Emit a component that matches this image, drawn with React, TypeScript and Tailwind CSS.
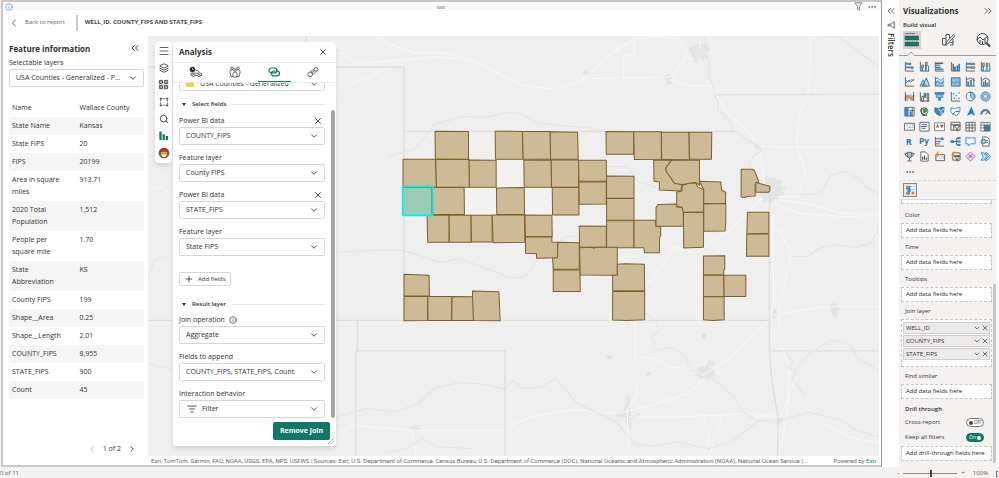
import React from 'react';
import {
  ChevronDown,
  ChevronLeft,
  ChevronRight,
  ChevronsLeft,
  ChevronsRight,
  Ellipsis,
  Info,
  Layers,
  ListFilter,
  Menu,
  Plus,
  Search,
  X,
} from 'lucide-react';

const GRAY = '#605e5c';
const BLUE = '#2b8ad0';
const LIGHT = '#8cc4ee';

const attributes = [
  ['Name', 'Wallace County'],
  ['State Name', 'Kansas'],
  ['State FIPS', '20'],
  ['FIPS', '20199'],
  ['Area in square miles', '913.71'],
  ['2020 Total Population', '1,512'],
  ['People per square mile', '1.70'],
  ['State Abbreviation', 'KS'],
  ['County FIPS', '199'],
  ['Shape__Area', '0.25'],
  ['Shape__Length', '2.01'],
  ['COUNTY_FIPS', '8,955'],
  ['STATE_FIPS', '900'],
  ['Count', '45'],
];

const westCounties = [
  'M136 34L236 35V118H137Z',
  'M316 34L398 35L400 118H317Z',
  'M398 35H481L482 118H400Z',
  'M481 36L563 37L565 118H482Z',
  'M40 118H138L140 202H40Z',
  'M138 118L238 119L239 202H140Z',
  'M238 120L319 121V202H239Z',
  'M402 121L484 120L485 202H403Z',
  'M484 120H566V202H485Z',
  'M128 203H223L224 284H129Z',
  'M320 204L403 203L404 284H321Z',
  'M487 203H567V285H488Z',
  'M112 285L178 286V367H114Z',
  'M178 286H244V367H179Z',
  'M244 286H307V366H245Z',
  'M307 285H404L405 367L310 368Z',
  'M405 285L486 286L487 350H407Z',
  'M407 351L486 350V366L504 367L503 413L440 415V401L407 400Z',
  'M504 367L568 368V448H490L488 415L503 413Z',
  'M490 449L570 450L571 514H490Z',
  'M43 463L118 466L119 527L43 528Z',
  'M43 529H114V601L43 602Z',
  'M114 529H187L185 601H115Z',
  'M187 529L250 530L251 601H186Z',
  'M248 513L327 515L328 530L331 602L251 601Z',
];

const eastCounties = [
  'M48 35L131 36V103H49Z',
  'M131 36H214V118L133 119Z',
  'M214 37H297L298 118L215 119Z',
  'M297 37H365L364 118H298Z',
  'M-34 121H49L50 184H-33Z',
  'M-33 186H49V252L-32 253Z',
  'M50 168L132 169V234L50 235Z',
  'M50 236H132V301H50Z',
  'M50 302H132V383H50Z',
  'M-32 318L49 319V382H-31Z',
  'M-31 383L8 382L11 385L16 382H82V466L-29 465Z',
  'M132 301H196L198 318L212 321V348L209 350L208 398H163L162 383H132Z',
  'M82 433L104 431L163 433L164 511L68 512V466L82 465Z',
  'M68 514H164V599L110 601L68 600Z',
  'M191 121L245 120L227 146L250 186L276 194L272 213L208 210V186L192 184Z',
  'M245 120L328 121V196L318 188L300 191L276 194L254 191L227 152L229 141Z',
  'M260 216L276 213V197L300 189L318 190L322 200L340 209V276L276 277V262L260 260Z',
  'M198 263L204 254L260 252V261L276 263L280 278V319H198Z',
  'M280 278L340 277V382L281 384Z',
  'M329 187L330 184L392 186L394 211L407 217L406 250L341 251V209Z',
  'M341 252L407 251V306L405 333L341 334Z',
  'M453 148H487L493 152L504 180L506 188L495 192V228L475 229L462 233L453 231Z',
  'M497 187L508 191L539 199V213L534 217H497Z',
  'M472 277H536V340L470 342Z',
  'M470 343L536 342V409H469Z',
  'M340 408L404 407V447L401 450V465H340Z',
  'M340 466H401L402 529H340Z',
  'M401 466H467V529H402Z',
  'M340 530H402V599L368 601L340 599Z',
];

const boundaries = [
  'M-546 202H206V395H1120L1130 395',
  'M206 395V961',
  'M-546 961H1228',
  'M-68 108V202',
  'M76 961V1052M71 1367V1052H488V1367',
  'M1075 285L1534 283',
  'M1228 1052H1534',
  'M1228 560V1052L1236 1150L1252 1250L1251 1367',
];

const rivers = [
  'M1045 108l4 22l8 20l-2 28l6 20l-2 30l10 28l6 30l10 20l-2 26l16 10l8 18l14 8l4 22l22 14l14 16l20 8l18 12l6 14l-22 12l-12 30l8 18l24 24l10 28l20 14l16 18',
  'M0 758L90 752L200 750L310 788L360 776L440 806L500 834L545 830L580 780L625 760L650 714L675 708L700 716',
  'M160 472L240 445L290 375L370 350L440 352L500 336L540 344L580 370L650 378L720 384L770 394',
  'M-546 1080L-400 1120L-300 1050L-200 1090L-60 1030L0 1255L100 1225L180 1235L245 1210L290 1165L360 1148L430 1152L490 1168L510 1140L540 1165L590 1160L630 1135L660 1170L690 1210L750 1240L800 1265L850 1330L900 1338L970 1325L1060 1345L1130 1318L1200 1260L1260 1260L1340 1236L1430 1260L1470 1290L1534 1310',
  'M884 940L910 965L922 990L896 1015L910 1030L900 1050L925 1048L950 1040L990 1065L1010 1108L1060 1125L1090 1155L1130 1190L1150 1232L1190 1260L1250 1268',
  'M1285 768L1330 770L1370 742L1420 735L1470 742L1510 730L1534 690M1340 768L1380 740',
  'M1310 585L1370 580L1400 525L1440 515L1480 538L1500 565L1534 580',
  'M1275 1060l20 24l-16 18l22 10l-10 26l20 24l14 26M1300 1108L1340 1060L1400 1020L1450 1030L1480 1080L1534 1110',
  'M770 500L830 500L860 545L905 560L960 575',
  'M1360 108L1420 110L1470 150L1534 200',
  'M148 1360L210 1345L260 1315L300 1340L400 1345',
  'M-546 460L-480 470L-430 360L-350 420L-260 380L-150 500L-60 440',
  'M-546 860L-520 850L-490 780L-460 770',
];

const roads = [
  'M0 320L60 255L150 210L210 180L290 172L370 178L420 192L480 228L540 258L620 268L690 248L740 208L800 150L850 120L910 110L970 118L1000 160L960 228L940 232L710 237L690 248',
  'M130 108L160 132L240 160L320 160L400 180',
  'M0 155L40 165L70 190L150 186L210 178',
  'M850 108V165L820 170V235M950 240L1000 258H1065L1110 340L1160 385L1200 440L1215 560',
  'M1343 108L1340 260L1310 350L1305 440L1330 520L1310 590L1250 590',
  'M1200 440L1300 442L1534 440',
  'M1240 600L1330 610L1430 640L1534 640M1240 610L1310 640L1440 650L1534 645',
  'M1210 590L1130 680L1020 760L960 740L940 780L900 840L850 870',
  'M853 962V1070L858 1180L830 1230L835 1360M858 1070L910 1075L950 1100L1010 1105L1045 1125L1120 1070L1228 960L1240 900L1235 640',
  'M0 1310L60 1275L230 1290L480 1290L560 1250L680 1228L800 1240L900 1215L1000 1180L1045 1135',
  'M835 1250L970 1250L1170 1240L1260 1250L1300 1140M1045 1255L1060 1300L1050 1360M1100 1240L1080 1300L1060 1367M230 1290L240 1367',
  'M1240 945L1380 920L1534 920M1255 945L1258 1030L1285 1100L1280 1220L1256 1367M1210 680L1255 690L1290 760L1270 850L1250 940',
  'M380 580L530 600L560 612L640 610M690 560L770 540',
  'M1534 1330L1450 1310L1380 1270M-546 580L-470 560L-440 595',
];

const towns = [
  'M1005 140h16v-8h10v12h6v-12h20v14h8l-6 10h-10v8h6v10h-10v10h-8v-8h-8v12h-12l2-14h-8v-12h-6z',
  'M928 232l14-8h12l2 30h-14l-4-14z',
  'M1208 545l10-12v-8l12 10l12-8l6 14l16 2l-6 12l22 8l-16 8l6 14l-14 2l-8 20l-8-8l-10 16l-6-14l-14 8v-18l-16 4l8-16l-8-8z',
  'M1026 1106l12-10l8 6l8-12l10 14l12 2l-4 12l6 8l-14 4l-6 10l-10-6l-12 8l-4-12l-12-4l6-8z',
  'M796 1240l24-10l10-44l8 2l4 60l26-14v10l-26 14v36l-12-10l-6-34h-26z',
  'M1240 925l14 8l-10 24l-10-4zM1396 912l16-4l14 14l-12 36l-14-20z',
  'M708 210l16 4l-2 12l-16-4zM770 1064l18 2v10l-14 2zM880 1118l18-4v8l-12 6zM222 1276l10 4v-10l8 8l12-4l-6 10l10 6h-14l-4 10l-6-10h-10z',
  'M1038 998l14 6l-4 12l-10-4zM1056 1078l16 6v10l-14 4zM1184 436l18-2l6 12l-16 4zM1250 1244l16 12l-10 20l-6-6z',
];

function CountyMap() {
  return (
    <svg
      className="absolute inset-0 h-full w-full"
      viewBox="0 0 2190 1260"
      preserveAspectRatio="xMidYMid slice"
      role="img"
      aria-label="Map of counties"
    >
      <rect width="2190" height="1260" fill="#efefef" />
      <g transform="translate(546 -108) scale(1.0714 1)" fill="none" strokeLinejoin="round">
        <path d={towns.join('')} fill="#e3e5e4" />
        <path d={roads.join('')} stroke="#f7f7f7" strokeWidth="3" />
        <path d={rivers.join('')} stroke="#e3e5e5" strokeWidth="3" />
        <path d={boundaries.join('')} stroke="#dfdfde" strokeWidth="4" />
      </g>
      <g transform="translate(724 252)">
        <path d="M319 121H402V202H319ZM224 203H320V284H224ZM404 203H487V284H404Z" fill="#f2f2f2" />
      </g>
      <g fill="#cdbb97" stroke="#7d5f2a" strokeWidth="3" strokeLinejoin="round">
        <g transform="translate(724 252)">
          {westCounties.map((d) => (
            <path key={d} d={d} />
          ))}
        </g>
        <g transform="translate(1324 252)">
          {eastCounties.map((d) => (
            <path key={d} d={d} />
          ))}
        </g>
      </g>
      <g transform="translate(724 252)">
        <rect x="39" y="199" width="90" height="87" rx="3" fill="#99ccb3" stroke="#00f0f0" strokeWidth="5" />
        <path d="M42 203H126V283" fill="none" stroke="#5f9d80" strokeWidth="3" />
      </g>
    </svg>
  );
}

type FieldProps = {
  id: string;
  label: string;
  value: string;
  removable?: boolean;
  info?: boolean;
  filter?: boolean;
};

function SelectField({ id, label, value, removable, info, filter }: FieldProps) {
  return (
    <div className="mb-[7px]">
      <div className="flex h-3 items-center justify-between">
        <label htmlFor={id} className="flex items-center gap-1 text-[7px]">
          {label}
          {info && <Info className="h-2 w-2" strokeWidth={2} />}
        </label>
        {removable && (
          <button type="button" aria-label={`Remove ${value}`} className="mr-0.5">
            <X className="h-[10px] w-[10px]" strokeWidth={2} />
          </button>
        )}
      </div>
      <div className="relative">
        {filter && <ListFilter className="absolute left-2 top-1 h-[10px] w-[10px]" strokeWidth={2} />}
        <select
          id={id}
          className={`block h-[18px] w-full appearance-none rounded-xs border border-[#d6d6d6] bg-white pr-4 text-[7px] ${
            filter ? 'pl-[22px]' : 'pl-1.5'
          }`}
        >
          <option>{value}</option>
        </select>
        <ChevronDown className="pointer-events-none absolute right-1.5 top-1 h-[10px] w-[10px]" strokeWidth={2} />
      </div>
    </div>
  );
}

function SectionTitle({ children }: { children: React.ReactNode }) {
  return (
    <h3 className="flex h-3 items-center gap-1.5 pl-[3px] text-[6px] font-semibold">
      <svg viewBox="0 0 4 3" className="h-[3px] w-1 fill-[#323130]">
        <path d="M0 0h4L2 3z" />
      </svg>
      {children}
      <span className="h-px flex-1 bg-[#e6e6e6]" />
    </h3>
  );
}

const toolbar = [
  { label: 'Menu', icon: <Menu className="h-3 w-3" strokeWidth={1.5} /> },
  { label: 'Layers', icon: <Layers className="h-[10px] w-[10px]" strokeWidth={2} /> },
  {
    label: 'Basemap',
    icon: (
      <svg viewBox="0 0 12 12" className="h-[11px] w-[11px]" fill="none" stroke="#444">
        <path d="M1.500 1.500h3.500v3.500H1.500zM7 1.500h3.500v3.500H7zM1.500 7h3.500v3.500H1.500zM7 7h3.500v3.500H7zM1.500 3.200h3.500M8.700 1.500V5M3.200 7v3.500M7 8.700h3.500" />
      </svg>
    ),
  },
  {
    label: 'Select',
    icon: (
      <svg viewBox="0 0 12 12" className="h-[10px] w-[10px]" fill="none" stroke="#444">
        <rect x="2" y="2" width="8" height="8" strokeDasharray="2 1.2" />
        <path d="M1 1h2v2H1zM9 1h2v2H9zM1 9h2v2H1zM9 9h2v2H9z" fill="#444" stroke="none" />
      </svg>
    ),
  },
  { label: 'Search', icon: <Search className="h-[10px] w-[10px]" strokeWidth={2} /> },
  {
    label: 'Analysis',
    icon: (
      <svg viewBox="0 0 12 12" className="h-[11px] w-[11px] fill-[#117865]">
        <path d="M1.500 1.500h2.500V11h-2.500zM5 4.500h2.500V11H5zM8.500 6.500H11V11H8.500z" />
      </svg>
    ),
  },
  {
    label: 'Infographics',
    icon: (
      <svg viewBox="0 0 12 12" className="h-3 w-3">
        <circle cx="6" cy="6" r="5.300" fill="#a8322d" />
        <path d="M.7 5.500h10.600v1.300a5.300 5.300 0 0 1-1 2.200H1.700a5.300 5.300 0 0 1-1-2.200z" fill="#3d8b3d" />
        <circle cx="6" cy="6.500" r="2.900" fill="#f5c242" />
        <path d="M3 5.500a3 3 0 0 1 6 0L7.500 4.800h-3z" fill="#d12f27" />
        <circle cx="4.900" cy="6.300" r=".5" fill="#222" />
        <circle cx="7.100" cy="6.300" r=".5" fill="#222" />
        <path d="M3.500 7.800h5L7.700 10H4.300z" fill="#fff" />
      </svg>
    ),
  },
];

const tabs = [
  {
    label: 'Drive time',
    icon: (
      <svg viewBox="0 0 14 12" className="h-3 w-[14px]" fill="none" stroke="#444" strokeWidth=".8">
        <circle cx="3.500" cy="3.500" r="2.500" fill="#222" />
        <path d="M3.500 2v1.600h1.200" stroke="#fff" strokeWidth=".6" />
        <path d="M7 4.500h1.800l1.500 2.200 2.200.8v2H2V7.200h8" />
        <circle cx="4.500" cy="9.500" r="1.200" fill="#fff" />
        <circle cx="10" cy="9.500" r="1.200" fill="#fff" />
      </svg>
    ),
  },
  {
    label: 'Demographics',
    icon: (
      <svg viewBox="0 0 14 12" className="h-3 w-[14px]" fill="none" stroke="#555" strokeWidth=".9">
        <circle cx="4" cy="2.300" r="1.300" />
        <circle cx="10" cy="2.300" r="1.300" />
        <circle cx="7" cy="4" r="1.300" />
        <path d="M2 7V5.400q0-1.500 1.500-1.500h1M12 7V5.400q0-1.500-1.500-1.500h-1M5 11V7.500Q5 6 7 6t2 1.500V11zM2 7l1 3.500h2M12 7l-1 3.500H9" />
      </svg>
    ),
  },
  {
    label: 'Join layer',
    icon: (
      <svg viewBox="0 0 14 12" className="h-3 w-[14px]" fill="none" stroke="#117865" strokeWidth="1.200">
        <rect x="2" y="2" width="8" height="4.800" rx="2.400" />
        <rect x="4.500" y="5" width="8" height="4.800" rx="2.400" />
      </svg>
    ),
  },
  {
    label: 'Find similar',
    icon: (
      <svg viewBox="0 0 14 12" className="h-3 w-[14px]" fill="none" stroke="#555" strokeWidth=".9">
        <circle cx="4.200" cy="8.300" r="2.300" />
        <circle cx="10" cy="3.400" r="1.900" />
        <path d="M4 6L8.300 3M6.500 8.700L10.600 5.200M5.500 7.200L8.800 4.400" />
      </svg>
    ),
  },
];

function AnalysisPanel() {
  return (
    <section className="absolute left-[25px] top-1.5 w-[163px] overflow-hidden rounded bg-white shadow-md">
      <header className="flex h-[21px] items-center justify-between border-b border-[#eaeaea] pl-1.5 pr-2">
        <h2 className="text-[8px] font-bold">Analysis</h2>
        <button type="button" aria-label="Close">
          <X className="h-[10px] w-[10px]" strokeWidth={2} />
        </button>
      </header>
      <nav className="flex h-5 gap-1.5 border-b border-[#eaeaea] px-1.5">
        {tabs.map((tab, i) => (
          <button
            key={tab.label}
            type="button"
            aria-label={tab.label}
            className={`flex flex-1 items-center justify-center border-b ${
              i === 2 ? 'border-[#117865]' : 'border-transparent'
            }`}
          >
            {tab.icon}
          </button>
        ))}
      </nav>
      <div className="flex h-[335px] overflow-hidden">
        <div className="-mt-2.5 min-w-0 flex-1 pl-1.5 pr-1.5">
          <div className="relative mb-[7px]">
            <svg viewBox="0 0 10 8" className="absolute left-1.5 top-1.5 h-2 w-[10px] fill-[#f0cf3c]">
              <path d="M1 1h3v2h5v5H1z" />
            </svg>
            <select
              aria-label="Layer to join"
              className="block h-[18px] w-full appearance-none rounded-xs border border-[#d6d6d6] pl-5 pt-1 text-[7px]"
            >
              <option>USA Counties - Generalized</option>
            </select>
            <ChevronDown className="pointer-events-none absolute right-1.5 top-1.5 h-[10px] w-[10px]" />
          </div>
          <SectionTitle>Select fields</SectionTitle>
          <div className="pt-[5px]">
            <SelectField id="pbi-county" label="Power BI data" value="COUNTY_FIPS" removable />
            <SelectField id="layer-county" label="Feature layer" value="County FIPS" />
            <SelectField id="pbi-state" label="Power BI data" value="STATE_FIPS" removable />
            <SelectField id="layer-state" label="Feature layer" value="State FIPS" />
          </div>
          <button
            type="button"
            className="mb-3 mt-4 flex h-[14px] items-center gap-1 rounded-xs border border-[#d6d6d6] px-1 text-[6px]"
          >
            <Plus className="h-[10px] w-[10px]" strokeWidth={2} />
            Add fields
          </button>
          <SectionTitle>Result layer</SectionTitle>
          <div className="pt-1">
            <SelectField id="operation" label="Join operation" value="Aggregate" info />
            <SelectField id="append" label="Fields to append" value="COUNTY_FIPS, STATE_FIPS, Count" />
            <SelectField id="behavior" label="Interaction behavior" value="Filter" filter />
          </div>
        </div>
        <div className="flex w-[5px] flex-col pt-[27px]">
          <div className="w-1 flex-1 rounded-full bg-[#a6a6a6]" />
        </div>
      </div>
      <footer className="relative flex justify-end pb-1.5 pr-1.5 pt-1">
        <button type="button" className="h-[18px] rounded-xs bg-[#117865] px-[7px] text-[7px] font-bold text-white">
          Remove join
        </button>
        <svg viewBox="0 0 6 6" className="absolute bottom-0.5 right-0.5 h-1.5 w-1.5" stroke="#888" strokeWidth=".6">
          <path d="M0 6L6 0M3 6L6 3" />
        </svg>
      </footer>
    </section>
  );
}

function FeatureInfo() {
  return (
    <aside className="flex w-[145px] shrink-0 flex-col pl-1.5 pr-1">
      <div className="flex h-[18px] items-end justify-between pr-[3px]">
        <h2 className="text-[8px] leading-[10px] font-bold">Feature information</h2>
        <button type="button" aria-label="Collapse">
          <ChevronsLeft className="h-3 w-3" strokeWidth={2} />
        </button>
      </div>
      <label htmlFor="layers" className="mt-[3px] text-[7px] leading-3">
        Selectable layers
      </label>
      <div className="relative">
        <select
          id="layers"
          className="block h-[18px] w-full appearance-none rounded-xs border border-[#d6d6d6] bg-white pl-1.5 text-[7px]"
        >
          <option>USA Counties - Generalized - P...</option>
        </select>
        <ChevronDown className="pointer-events-none absolute right-1.5 top-1 h-[10px] w-[10px]" strokeWidth={2} />
      </div>
      <table className="mt-3 w-full table-fixed text-[7px] leading-3">
        <tbody>
          {attributes.map(([name, value]) => (
            <tr key={name} className="align-top even:bg-[#f5f5f5]">
              <th scope="row" className="w-1/2 py-[3px] pl-[3px] pr-[5px] text-left font-normal">
                {name}
              </th>
              <td className="py-[3px] pl-[3px]">{value}</td>
            </tr>
          ))}
        </tbody>
      </table>
      <div className="mt-auto mb-2.5 flex items-center justify-end gap-1.5 pr-[7px] text-[7px] leading-3">
        <button type="button" aria-label="Previous" disabled className="text-[#aaa]">
          <ChevronLeft className="h-[10px] w-[10px]" />
        </button>
        1 of 2
        <button type="button" aria-label="Next">
          <ChevronRight className="h-[10px] w-[10px]" />
        </button>
      </div>
    </aside>
  );
}

const Axis = () => <path d="M1.500 1v10H11" stroke={GRAY} />;

const Lightning = () => <path d="M4 .5L1 5h2L1.500 8.500L6 4H4L5.500.5z" fill="#f08c2e" />;

const visuals: [string, React.ReactNode][] = [
  ['Stacked bar', <><Axis /><path d="M2 2h3v2H2zM2 6h5v2H2z" fill={BLUE} /><path d="M5.500 2.500h2v1.500h-2zM7.500 6.500H10V8H7.500z" stroke={GRAY} /></>],
  ['Stacked column', <><Axis /><path d="M3.500 7v4M7.500 4v7" stroke={BLUE} strokeWidth="2" /><path d="M3 4.500h2V7H3zM7 1.500h2V5H7zM10.500 5v6" stroke={GRAY} /></>],
  ['Clustered bar', <><Axis /><path d="M2 2.500h8M2 7h5" stroke={GRAY} strokeWidth="1.500" /><path d="M2 4.500h5M2 9h8" stroke={BLUE} strokeWidth="1.500" /></>],
  ['Clustered column', <><Axis /><path d="M3.500 3v8M8 5v6" stroke={GRAY} strokeWidth="1.500" /><path d="M5.500 6v5M10 3v8" stroke={BLUE} strokeWidth="2" /></>],
  ['100% stacked bar', <><Axis /><path d="M2 2h4v2H2zM2 6h5v2H2z" fill={BLUE} /><path d="M6 2.500h4.500V4H6zM7 6.500h3.500V8H7z" stroke={GRAY} /></>],
  ['100% stacked column', <><Axis /><path d="M3.500 5.500V11M7.500 6.500V11M10.500 7v4" stroke={BLUE} strokeWidth="1.500" /><path d="M3 2.500h1.500V6H3zM7 2.500h1.500V6H7zM10.500 2v5" stroke={GRAY} /></>],
  ['Line', <><Axis /><path d="M2 8l3-3 2 2 4-4" stroke={GRAY} /><path d="M2 5l3 1 3-2 3 1" stroke={BLUE} /></>],
  ['Area', <><path d="M1 11L4.500 4L8 11z" fill={LIGHT} stroke={BLUE} /><path d="M4 11l4-9 3.500 9z" stroke={GRAY} fill="#8cc4ee88" /></>],
  ['Stacked area', <><path d="M1 6l3-2 3 3 4-4v8H1z" fill={LIGHT} /><path d="M1 4l3-2 3 3 4-3M1 8l3-2 3 2 4-2" stroke={BLUE} /><Axis /></>],
  ['100% area', <><path d="M1.500 2h9.500v9H1.500z" fill={LIGHT} stroke={GRAY} /><path d="M1.500 6l3 2 3-2 3 2" stroke={BLUE} /></>],
  ['Line and stacked column', <><Axis /><path d="M3.500 6v5M6.500 4v7" stroke={BLUE} strokeWidth="2" /><path d="M9.500 2v9M2 4l4-2 5 3" stroke={GRAY} /></>],
  ['Line and clustered column', <><Axis /><path d="M4 6v5M8 7v4" stroke={BLUE} strokeWidth="2" /><path d="M6 4v7M10 5v6M2 5l4-3 5 3" stroke={GRAY} /></>],
  ['Ribbon', <><path d="M1 2l3 4 3-3 4 4v4H8L6 8l-2 3H1z" fill={LIGHT} /><path d="M1 9l3-4 4 4 3-5" stroke="#e8893c" strokeWidth="2" /><path d="M1.500 1v10M10.500 1v10" stroke={GRAY} /></>],
  ['Waterfall', <><Axis /><path d="M3 6h2v5H3zM5.500 2.500h2V7h-2zM9 2.500h1.500V11H9z" stroke={GRAY} /><path d="M5.500 3h2v3h-2z" fill={BLUE} /></>],
  ['Funnel', <><path d="M1 1.500h10v2H1z" fill={BLUE} stroke={GRAY} strokeWidth=".5" /><path d="M2.500 4h7v3h-7z" fill={LIGHT} stroke={BLUE} /><path d="M4.500 7.500h3v3h-3z" fill={BLUE} /></>],
  ['Scatter', <><Axis /><path d="M3 3h1.500M6 5h1.500M9 2h1.500M9 8h1.500M4 8h1.500" stroke={BLUE} strokeWidth="1.500" /></>],
  ['Pie', <><circle cx="6" cy="6" r="4.800" stroke={GRAY} fill="#fff" /><path d="M6 1.200A4.800 4.800 0 0 1 9 9.700L6 6z" fill={LIGHT} stroke={BLUE} /></>],
  ['Donut', <><circle cx="6" cy="6" r="3.700" stroke={LIGHT} strokeWidth="2.500" /><circle cx="6" cy="6" r="5" stroke={BLUE} /><circle cx="6" cy="6" r="2.300" stroke={GRAY} strokeWidth=".7" /></>],
  ['Treemap', <><path d="M1 1.500h10v9.500H1z" fill="#fff" stroke={GRAY} /><path d="M1 1.500h4V11H1zM6 6h2.500v5H6z" fill={BLUE} /><path d="M6 5h5M9 2v9" stroke={GRAY} /></>],
  ['Map', <><circle cx="6" cy="5.500" r="3.700" fill="#fff" stroke={GRAY} /><path d="M4 3l4-1 1 4-3 2-2-1z" fill="#3c9a4c" /><path d="M3 10h6M3 2Q0 7 6 10.500" stroke="#333" /></>],
  ['Filled map', <><path d="M1 2l4 1 2-1 4-.5-.5 5L7 10.500L3 9L1 6z" fill={BLUE} stroke={GRAY} /><path d="M5 3l2 3 4-3" stroke="#fff" /><path d="M7 6l3 1-3 3z" fill={LIGHT} /></>],
  ['Shape map', <><path d="M1 2l4 1 2-1 4-.5-.5 5L7 10.500L3 9L1 6z" fill="#fff" stroke={BLUE} /><path d="M3 9l3-3h4" stroke={GRAY} /></>],
  ['Azure map', <path d="M7 .5L11 11L7 8.500L2 11z" fill="#1686cf" />],
  ['Gauge', <><path d="M1.500 9a4.500 4.500 0 0 1 9 0" stroke={GRAY} strokeWidth="2" /><path d="M1.500 9A4.500 4.500 0 0 1 8 5" stroke={BLUE} strokeWidth="2" /><path d="M6 9l2.500-2" stroke="#333" /></>],
  ['Card', <><path d="M.5 2.500h11v7.500H.5z" fill="#fff" stroke={GRAY} /><text x="2" y="8" fontSize="5" fill={BLUE}>123</text></>],
  ['Multi-row card', <><path d="M1 1.500h10V11H1z" fill="#fff" stroke={GRAY} /><path d="M3 4h6M3 8h4" stroke={BLUE} strokeWidth="1.500" /><path d="M2 6h7" stroke={GRAY} /></>],
  ['KPI', <><path d="M.5 2h11v8.500H.5z" fill="#fff" stroke={GRAY} strokeWidth=".8" /><path d="M2 7l2-4 2 4z" fill="#3c9a4c" /><path d="M6.500 4h4L8.500 8z" fill="#d13438" /></>],
  ['Slicer', <><path d="M1 1.500h10V10H1zM1 4h10M4 4v6" stroke={GRAY} /><path d="M4 5h7L8.500 8v3L7 10V8z" fill="#ddd" stroke={GRAY} /></>],
  ['Table', <><path d="M1 1.500h10V11H1zM1 4.500h10M1 7.500h10M4.500 2v9M7.800 2v9" fill="#fff" stroke={GRAY} /></>],
  ['Matrix', <><path d="M1 1.500h10V11H1z" fill="#fff" /><path d="M4.500 4.500H11V11H4.500z" fill={BLUE} /><path d="M1 1.500h10V11H1zM1 4.500h10M1 7.500h10M4.500 2v9M7.800 2v9" stroke={GRAY} strokeWidth=".8" /></>],
  ['R script', <text x="2" y="10" fontSize="10" fontWeight="700" fill="#2b79b9">R</text>],
  ['Python', <text x="0" y="9" fontSize="9" fontWeight="700" fill="#2b79b9">Py</text>],
  ['Key influencers', <><Axis /><path d="M2 3h6M2 6h3M2 8.500h4" stroke={GRAY} /><circle cx="9" cy="3" r="1.700" fill={BLUE} /><circle cx="6" cy="6" r="1.200" fill={BLUE} /></>],
  ['Decomposition tree', <><path d="M4 6h2.500M7 2.500v7M7 2.500h2M7 6h2M7 9.500h2" stroke={GRAY} /><path d="M.5 4.500h4v3h-4zM8 1h3.500v2.500H8zM8 5h3.500v2H8zM8 8.500h3.500V11H8z" fill={BLUE} /></>],
  ['Q&A', <path d="M1 2h10v6.500H6L3.500 11V8.500H1z" fill="#fff" stroke={BLUE} />],
  ['Narrative', <><path d="M3 1h4.500L10 3.500V11H3z" fill="#fff" stroke={GRAY} /><path d="M5 5h3.500M5 7h3.500" stroke={GRAY} /><path d="M1.500 4h4v4h-4z" stroke={BLUE} /></>],
  ['Metrics', <><path d="M3.500 1.500h5V5a2.500 2.500 0 0 1-5 0z" fill={LIGHT} stroke={GRAY} /><path d="M3.500 2.500H1q0 3 3 3.500M8.500 2.500H11q0 3-3 3.500M6 7.500v3M3.500 10.800h5" stroke={GRAY} /></>],
  ['Paginated report', <><path d="M2 1h5l3 3v7H2z" fill="#fff" stroke={GRAY} /><path d="M4 6v3.500M6 5v4.500M8 7v2.500" stroke="#444" strokeWidth="1.200" /></>],
  ['New card', <><path d="M2 4h9.500v6.500H2z" fill="#fff" stroke={GRAY} /><text x="4.500" y="9" fontSize="4" fill={BLUE}>123</text><Lightning /></>],
  ['New slicer', <><path d="M3 2h8v8H3zM3 5h8" stroke={GRAY} /><path d="M5 6h6L8.500 8.500V11L7 10V8.500z" fill="#ddd" stroke={GRAY} /><Lightning /></>],
  ['Power Apps', <path d="M6 1l5 5-5 5-5-5zM4 3.500L8.500 8M8 3.500L3.500 8M6 4.500L7.500 6L6 7.500L4.500 6z" stroke="#a85ab5" />],
  ['Power Automate', <path d="M1 2h3l3.500 4L4 10H1l3-4zM5.500 2H8l3.500 4L8 10H5.500L9 6z" stroke={BLUE} fill="#d5e9f8" />],
];

function DropZone({ title, children }: { title?: string; children: React.ReactNode }) {
  return (
    <div>
      {title && <h4 className="mb-0.5 h-[15px] pl-1 pt-1 text-[6px] leading-[10px]">{title}</h4>}
      <div className="border border-dashed border-[#c8c6c4] bg-white">{children}</div>
    </div>
  );
}

const Empty = ({ text = 'Add data fields here' }) => (
  <p className="h-[13px] whitespace-nowrap pl-1 text-[6px] leading-[13px] text-[#252423]">{text}</p>
);

function Toggle({ id, label, on }: { id: string; label: string; on?: boolean }) {
  return (
    <label htmlFor={id} className="relative flex h-[15px] items-center justify-between pl-1 pr-2 text-[6px]">
      {label}
      <input id={id} type="checkbox" defaultChecked={on} className="sr-only" />
      <span
        className={`flex h-[9px] w-[18px] items-center justify-between rounded-full border px-0.5 text-[5px] leading-none ${
          on ? 'flex-row-reverse border-[#117865] bg-[#117865] text-white' : 'border-[#797775] bg-white'
        }`}
      >
        <i className={`h-1 w-1 shrink-0 rounded-full ${on ? 'bg-white' : 'bg-[#484644]'}`} />
        <span>{on ? 'On' : 'Off'}</span>
      </span>
    </label>
  );
}

function Visualizations() {
  return (
    <aside className="flex w-[97px] shrink-0 flex-col bg-[#f3f2f1] pt-[3px]">
      <header className="flex h-[15px] items-center justify-between pl-1 pr-0.5">
        <h2 className="text-[8px] font-bold">Visualizations</h2>
        <button type="button" aria-label="Collapse pane">
          <ChevronsRight className="h-3 w-3" strokeWidth={1.500} />
        </button>
      </header>
      <h3 className="mt-px h-3 pl-1 text-[6px] leading-3 font-semibold">Build visual</h3>
      <div className="flex justify-between border-b border-[#a19f9d] pb-1.5 pl-1 pr-1">
        <button type="button" aria-label="Build visual" className="relative bg-[#d2d0ce]">
          <svg viewBox="0 0 18 18" className="h-[18px] w-[18px]" fill="none">
            <path d="M2 2.500h10" stroke="#777" />
            <path d="M2 5h13.500v4H2zM2 11h13.500v4H2z" fill="#117865" stroke="#444" strokeWidth=".7" strokeDasharray="1.500 .8" />
          </svg>
          <svg viewBox="0 0 8 4" className="absolute -bottom-[7px] left-1 h-1 w-2" fill="#f3f2f1" stroke="#a19f9d">
            <path d="M0 4L4 0L8 4" />
          </svg>
        </button>
        <button type="button" aria-label="Format visual">
          <svg viewBox="0 0 18 18" className="h-[18px] w-[18px]" fill="none" stroke="#555">
            <path d="M3.500 7.500H7V14H3.500zM7 7.500V3.500h3.500V8M11.500 11.500h2.500V8M14 11v3h-3" />
            <path d="M16 4.500L9.500 12l-2.500 2.500.5-3.500L14.500 3.500z" fill="#f3f2f1" />
          </svg>
        </button>
        <button type="button" aria-label="Analytics">
          <svg viewBox="0 0 18 18" className="h-[18px] w-[18px]" fill="none" stroke="#444">
            <circle cx="8.500" cy="8" r="5.500" />
            <path d="M3 9l3-3 3 3 5-4M6 9v3M8.500 10v3M11 8v4" />
            <path d="M12.500 12l3.500 3.500" strokeWidth="2" />
          </svg>
        </button>
      </div>
      <div className="mt-[3px] grid grid-cols-6 pl-[3px] pr-[3px]">
        {visuals.map(([name, drawing]) => (
          <button key={name} type="button" aria-label={name} className="flex h-[15px] items-center justify-center">
            <svg viewBox="0 0 12 12" className="h-[11px] w-[11px]" fill="none">
              {drawing}
            </svg>
          </button>
        ))}
      </div>
      <button type="button" aria-label="More visuals" className="flex h-4 items-center pl-1.5">
        <Ellipsis className="h-[10px] w-[10px]" strokeWidth={1.500} />
      </button>
      <div className="ml-1 border-t border-dashed border-[#d8d6d4] pt-0.5">
        <button type="button" aria-label="ArcGIS for Power BI" className="block border border-[#8a8886] bg-[#e1dfdd]">
          <svg viewBox="0 0 12 12" className="h-3 w-3">
            <rect width="12" height="12" fill="#d7ebf7" />
            <path d="M2 2h8v3L7 6l-2 5-3-1 2-4-2-1z" fill="#2f8fce" />
            <path d="M6 3l3-1 2 2-4 2z" fill="#fff" />
            <circle cx="3.500" cy="3" r="1.500" fill="#ef7d29" />
            <circle cx="9" cy="9" r="1.500" fill="#ef7d29" />
            <circle cx="3" cy="9" r="1.300" fill="#ef7d29" />
          </svg>
        </button>
      </div>
      <div className="mt-0.5 flex flex-1 border-t border-[#dcdad8] pb-1">
        <div className="min-w-0 flex-1 pl-0.5">
          <div className="mb-0.5 h-1 border border-t-0 border-dashed border-[#c8c6c4] bg-white" />
          <DropZone title="Color"><Empty /></DropZone>
          <DropZone title="Time"><Empty /></DropZone>
          <DropZone title="Tooltips"><Empty /></DropZone>
          <DropZone title="Join layer">
            <ul className="flex flex-col gap-px px-px pb-1.5 pt-0.5">
              {['WELL_ID', 'COUNTY_FIPS', 'STATE_FIPS'].map((field) => (
                <li
                  key={field}
                  className="flex h-3 items-center border border-[#d2d0ce] bg-[#edebe9] pl-0.5 text-[6px]"
                >
                  <span className="flex-1">{field}</span>
                  <ChevronDown className="h-2 w-2" />
                  <button type="button" aria-label={`Remove ${field}`}>
                    <X className="h-2 w-2" />
                  </button>
                </li>
              ))}
            </ul>
          </DropZone>
          <DropZone title="Find similar"><Empty /></DropZone>
          <h3 className="h-4 pl-1 pt-[5px] text-[6px] leading-[10px] font-semibold">Drill through</h3>
          <Toggle id="cross" label="Cross-report" />
          <Toggle id="keep" label="Keep all filters" on />
          <div className="pt-px">
            <DropZone><Empty text="Add drill-through fields here" /></DropZone>
          </div>
        </div>
        <div className="flex w-1 flex-col pl-px pt-[84px]">
          <div className="flex-1 bg-[#c8c6c4]" />
        </div>
      </div>
    </aside>
  );
}

export default function App() {
  return (
    <div className="flex min-h-screen flex-col bg-[#f3f2f1] font-['Open_Sans','Noto_Sans',sans-serif] text-[#323130]">
      <div className="flex flex-1">
        <main className="ml-px flex min-w-0 flex-1 flex-col border-2 border-r border-[#c8c8c8] border-r-[#9a9a9a] bg-white">
          <div className="grid h-[9px] grid-cols-3 items-center bg-[#fafafa] pl-0.5 pr-1">
            <Info className="h-2 w-2 text-[#5b8fc7]" />
            <span className="h-[3px] w-2 justify-self-center bg-[#c4c4c4]" />
            <span className="flex gap-1 justify-self-end">
              <svg viewBox="0 0 10 10" className="h-[9px] w-[9px]" fill="none" stroke="#777">
                <path d="M1 1h8L6 5v4L4 8V5z" />
              </svg>
              <Ellipsis className="h-[10px] w-[10px] text-[#666]" />
            </span>
          </div>
          <header className="flex h-[25px] items-center pb-0.5">
            <a href="#report" className="flex items-center gap-[5px] pl-[5px] text-[6px] text-[#666]">
              <ChevronLeft className="h-3 w-3 text-[#323130]" strokeWidth={1.500} />
              Back to report
            </a>
            <span className="ml-[11px] h-4 w-0.5 bg-[#c8c8c8]" />
            <h1 className="pl-[7px] text-[6px] font-bold text-[#484644]">WELL_ID, COUNTY_FIPS AND STATE_FIPS</h1>
          </header>
          <div className="flex flex-1">
            <FeatureInfo />
            <div className="mr-0.5 flex min-w-0 flex-1 flex-col">
              <div className="relative flex-1 overflow-hidden">
                <CountyMap />
                <div className="absolute left-[7px] top-1.5 flex w-[17px] flex-col rounded bg-white pb-0.5 shadow-md">
                  {toolbar.map((tool) => (
                    <button
                      key={tool.label}
                      type="button"
                      aria-label={tool.label}
                      className="flex h-[17px] items-center justify-center"
                    >
                      {tool.icon}
                    </button>
                  ))}
                </div>
                <AnalysisPanel />
              </div>
              <footer className="flex h-[9px] items-center justify-between gap-2 pl-[3px] pr-[3px] font-['Roboto',sans-serif] text-[6px] text-[#666]">
                <p className="truncate">
                  Esri, TomTom, Garmin, FAO, NOAA, USGS, EPA, NPS, USFWS | Sources: Esri; U.S. Department of Commerce,
                  Census Bureau; U.S. Department of Commerce (DOC), National Oceanic and Atmospheric Administration
                  (NOAA), National Ocean Service (...
                </p>
                <p className="shrink-0">
                  Powered by <a href="#esri" className="text-[#117865]">Esri</a>
                </p>
              </footer>
            </div>
          </div>
        </main>
        <aside className="flex w-[17px] shrink-0 flex-col items-center gap-1 bg-white pt-[5px]">
          <button type="button" aria-label="Expand filters">
            <ChevronsLeft className="h-3 w-3" strokeWidth={1.500} />
          </button>
          <svg viewBox="0 0 10 10" className="h-2 w-2 rotate-90" fill="none" stroke="#444">
            <path d="M1 1h8L6 5v4L4 8V5z" />
          </svg>
          <h2 className="text-[8px] leading-3 font-semibold [writing-mode:vertical-rl]">Filters</h2>
        </aside>
        <Visualizations />
        <div className="w-[3px] shrink-0 bg-[#fafafa]" />
      </div>
      <footer className="flex h-[11px] items-center justify-between pr-px pt-0.5 text-[6px] text-[#605e5c]">
        <span>0 of 11</span>
        <div className="flex items-center gap-1">
          <button type="button" aria-label="Zoom out">-</button>
          <span className="relative h-px w-[54px] bg-[#8a8886]">
            <input type="range" aria-label="Zoom" className="absolute inset-0 w-full opacity-0" />
            <i className="absolute -top-[3px] left-1/2 h-[7px] w-0.5 bg-[#484644]" />
          </span>
          <button type="button" aria-label="Zoom in">+</button>
          <span className="pl-1 pr-1">100%</span>
          <i className="h-1.5 w-0.5 border border-r-0 border-[#8661a8]" />
        </div>
      </footer>
    </div>
  );
}
